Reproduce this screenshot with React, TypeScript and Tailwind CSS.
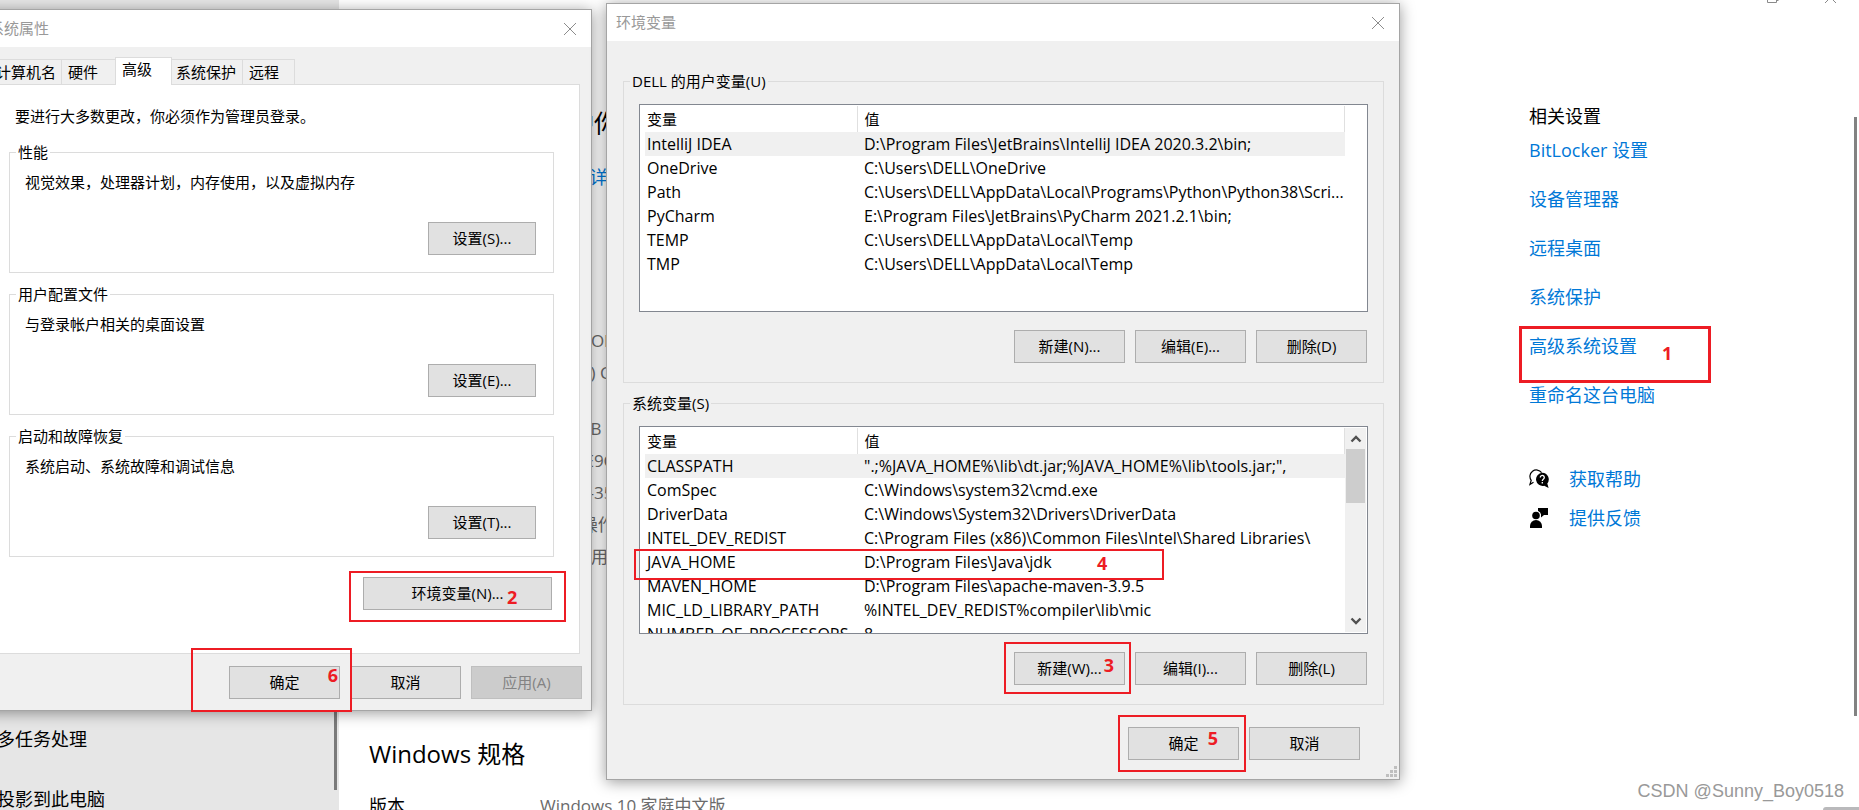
import clsx from "clsx";
import { ReactNode } from "react";

interface Variable {
  name: string;
  value: string;
}

const userVariables: Variable[] = [
  { name: "IntelliJ IDEA", value: "D:\\Program Files\\JetBrains\\IntelliJ IDEA 2020.3.2\\bin;" },
  { name: "OneDrive", value: "C:\\Users\\DELL\\OneDrive" },
  { name: "Path", value: "C:\\Users\\DELL\\AppData\\Local\\Programs\\Python\\Python38\\Scri..." },
  { name: "PyCharm", value: "E:\\Program Files\\JetBrains\\PyCharm 2021.2.1\\bin;" },
  { name: "TEMP", value: "C:\\Users\\DELL\\AppData\\Local\\Temp" },
  { name: "TMP", value: "C:\\Users\\DELL\\AppData\\Local\\Temp" },
];

const systemVariables: Variable[] = [
  { name: "CLASSPATH", value: '".;%JAVA_HOME%\\lib\\dt.jar;%JAVA_HOME%\\lib\\tools.jar;",' },
  { name: "ComSpec", value: "C:\\Windows\\system32\\cmd.exe" },
  { name: "DriverData", value: "C:\\Windows\\System32\\Drivers\\DriverData" },
  { name: "INTEL_DEV_REDIST", value: "C:\\Program Files (x86)\\Common Files\\Intel\\Shared Libraries\\" },
  { name: "JAVA_HOME", value: "D:\\Program Files\\Java\\jdk" },
  { name: "MAVEN_HOME", value: "D:\\Program Files\\apache-maven-3.9.5" },
  { name: "MIC_LD_LIBRARY_PATH", value: "%INTEL_DEV_REDIST%compiler\\lib\\mic" },
  { name: "NUMBER_OF_PROCESSORS", value: "8" },
];

const relatedLinks = [
  "BitLocker 设置",
  "设备管理器",
  "远程桌面",
  "系统保护",
  "高级系统设置",
  "重命名这台电脑",
];

interface StepProps {
  n: number;
  box: string;
  digit: string;
}

// red frame with its step number, laid over the control it sits in
const Step: React.FC<StepProps> = ({ n, box, digit }) => (
  <>
    <span className={clsx("pointer-events-none absolute z-10 border-[#ed1c24]", box)} />
    <span
      className={clsx(
        "pointer-events-none absolute z-10 text-lg leading-5 font-bold text-[#ed1c24]",
        digit
      )}
    >
      {n}
    </span>
  </>
);

interface ButtonProps {
  children: ReactNode;
  className?: string;
  disabled?: boolean;
}

const Button: React.FC<ButtonProps> = ({ children, className, disabled }) => (
  <button
    type="button"
    disabled={disabled}
    className={clsx(
      "h-[33px] border text-[15px]",
      disabled
        ? "border-[#bfbfbf] bg-[#cccccc] text-[#838383]"
        : "border-[#adadad] bg-[#e1e1e1] text-black",
      className ?? "w-[111px]"
    )}
  >
    {children}
  </button>
);

const CloseButton = () => (
  <button type="button" aria-label="关闭" className="p-2">
    <svg width="14" height="14" viewBox="0 0 14 14" stroke="#8c8c8c" fill="none">
      <path d="M1 1l12 12M13 1L1 13" />
    </svg>
  </button>
);

const Group: React.FC<{ title: string; children: ReactNode }> = ({ title, children }) => (
  <fieldset className="border border-[#dcdcdc]">
    <legend className="ml-[6px] px-[2px] leading-[22px]">{title}</legend>
    {children}
  </fieldset>
);

const SettingGroup: React.FC<{ title: string; text: string; button: string }> = ({
  title,
  text,
  button,
}) => (
  <Group title={title}>
    <div className="flex flex-col pt-2 pr-[17px] pb-[17px] pl-[15px]">
      <p className="leading-[22px]">{text}</p>
      <Button className="mt-[29px] w-[108px] self-end">{button}</Button>
    </div>
  </Group>
);

const ScrollBar = () => (
  <div className="my-px flex w-[21px] shrink-0 flex-col bg-[#f0f0f0] pl-px">
    <svg width="20" height="21" viewBox="0 0 20 21" fill="none" stroke="#505050" strokeWidth="2.4">
      <path d="M5.5 13.5L10 9l4.500 4.500" />
    </svg>
    <div className="h-[54px] w-[19px] bg-[#cdcdcd]" />
    <svg
      className="mt-auto"
      width="20"
      height="21"
      viewBox="0 0 20 21"
      fill="none"
      stroke="#505050"
      strokeWidth="2.4"
    >
      <path d="M5.500 7.500L10 12l4.500-4.500" />
    </svg>
  </div>
);

interface VariableTableProps {
  rows: Variable[];
  scroll?: boolean;
  marked?: boolean;
}

const VariableTable: React.FC<VariableTableProps> = ({ rows, scroll, marked }) => (
  <div className="relative">
    <div className="flex h-[208px] overflow-hidden border border-[#828790] bg-white pr-px pl-[5px]">
      <div className="min-w-0 flex-1 overflow-hidden pt-px">
        <table className="w-full table-fixed text-left">
          <thead>
            <tr className="h-[26px]">
              <th className="w-[212px] border-r border-[#e0e0e0] pl-[2px] font-normal">变量</th>
              <th className="border-r border-[#e0e0e0] pl-[7px] font-normal">值</th>
            </tr>
          </thead>
          <tbody>
            {rows.map((row, i) => (
              <tr
                key={row.name}
                className={clsx("h-6 text-base leading-6", i === 0 && "bg-[#f0f0f0]")}
              >
                <td className="pl-[2px] whitespace-nowrap">{row.name}</td>
                <td className="pl-[7px] whitespace-nowrap">{row.value}</td>
              </tr>
            ))}
          </tbody>
        </table>
      </div>
      {scroll ? <ScrollBar /> : <div className="w-[21px] shrink-0" />}
    </div>
    {marked && (
      <Step
        n={4}
        box="top-[123px] -left-[5px] h-[31px] w-[530px] border-2"
        digit="top-[127px] left-[458px]"
      />
    )}
  </div>
);

const SystemProperties = () => (
  <section className="absolute top-[9px] -left-5 w-[612px] border border-[#a5a5a5] bg-[#f0f0f0] shadow-[0_2px_14px_rgba(0,0,0,0.4)]">
    <header className="flex h-[37px] items-center justify-between bg-white pr-[6px] pl-2 text-[#999999]">
      <h2>系统属性</h2>
      <CloseButton />
    </header>
    <div className="pt-[10px] pr-[9px] pb-[11px] pl-2">
      <div role="tablist" className="flex h-[27px] items-end">
        <button type="button" role="tab" className="h-[25px] w-[73px] border border-b-0 border-[#dcdcdc] pl-[6px] text-left">
          计算机名
        </button>
        <button type="button" role="tab" className="h-[25px] w-[53px] border-t border-[#dcdcdc] pl-[6px] text-left">
          硬件
        </button>
        <button
          type="button"
          role="tab"
          aria-selected="true"
          className="relative -mb-px h-7 w-[57px] border border-b-0 border-[#dcdcdc] bg-white pb-1 pl-[6px] text-left"
        >
          高级
        </button>
        <button type="button" role="tab" className="h-[25px] w-[71px] border-t border-r border-[#dcdcdc] pl-1 text-left">
          系统保护
        </button>
        <button type="button" role="tab" className="h-[25px] w-[52px] border-t border-r border-[#dcdcdc] pl-[6px] text-left">
          远程
        </button>
      </div>
      <div className="mr-[2px] flex h-[570px] flex-col border border-[#dcdcdc] bg-white pt-5 pr-[25px] pl-[19px]">
        <p className="pl-[6px] leading-[22px]">要进行大多数更改，你必须作为管理员登录。</p>
        <div className="mt-[14px] flex flex-col gap-[10px]">
          <SettingGroup title="性能" text="视觉效果，处理器计划，内存使用，以及虚拟内存" button="设置(S)..." />
          <SettingGroup title="用户配置文件" text="与登录帐户相关的桌面设置" button="设置(E)..." />
          <SettingGroup title="启动和故障恢复" text="系统启动、系统故障和调试信息" button="设置(T)..." />
        </div>
        <div className="relative mt-5 mr-[2px] self-end">
          <Button className="w-[189px]">环境变量(N)...</Button>
          <Step n={2} box="-inset-x-[14px] -top-[6px] -bottom-3 border-2" digit="top-[10px] left-[144px]" />
        </div>
      </div>
      <div className="mt-3 flex justify-end gap-[10px]">
        <div className="relative">
          <Button>确定</Button>
          <Step
            n={6}
            box="-top-[18px] -right-3 -bottom-[13px] -left-[38px] border-2"
            digit="right-[2px] -top-px"
          />
        </div>
        <Button>取消</Button>
        <Button disabled>应用(A)</Button>
      </div>
    </div>
  </section>
);

const EnvironmentVariables = () => (
  <section className="absolute top-[3px] left-[606px] w-[794px] border border-[#a5a5a5] bg-[#f0f0f0] shadow-[0_2px_14px_rgba(0,0,0,0.4)]">
    <header className="flex h-[37px] items-center justify-between bg-white pr-[6px] pl-[9px] text-[#999999]">
      <h2>环境变量</h2>
      <CloseButton />
    </header>
    <div className="pt-[29px] pr-[15px] pb-[19px] pl-4">
      <div className="flex flex-col gap-[9px]">
        <Group title="DELL 的用户变量(U)">
          <div className="px-[15px] pt-3 pb-[19px]">
            <VariableTable rows={userVariables} />
            <div className="mt-[18px] flex justify-end gap-[10px] pr-px">
              <Button>新建(N)...</Button>
              <Button>编辑(E)...</Button>
              <Button>删除(D)</Button>
            </div>
          </div>
        </Group>
        <Group title="系统变量(S)">
          <div className="px-[15px] pt-3 pb-[19px]">
            <VariableTable rows={systemVariables} scroll marked />
            <div className="mt-[18px] flex justify-end gap-[10px] pr-px">
              <div className="relative">
                <Button>新建(W)...</Button>
                <Step
                  n={3}
                  box="-top-[10px] -right-[6px] -bottom-[9px] -left-[10px] border-2"
                  digit="right-[11px] top-[3px]"
                />
              </div>
              <Button>编辑(I)...</Button>
              <Button>删除(L)</Button>
            </div>
          </div>
        </Group>
      </div>
      <div className="mt-[22px] flex justify-end gap-[10px] pr-6">
        <div className="relative">
          <Button>确定</Button>
          <Step n={5} box="-top-3 -right-[7px] -bottom-3 -left-[10px] border-2" digit="right-[21px] top-px" />
        </div>
        <Button>取消</Button>
      </div>
    </div>
    <svg className="absolute right-[2px] bottom-[2px]" width="11" height="11" fill="#bfbfbf">
      <path d="M8 0h3v3h-3zM4 4h3v3h-3zM8 4h3v3h-3zM0 8h3v3h-3zM4 8h3v3h-3zM8 8h3v3h-3z" />
    </svg>
  </section>
);

const HelpIcon = () => (
  <svg width="20" height="20" viewBox="0 0 20 20">
    <path
      d="M4.500 13.200L.9 15.500l1.300-4.200A6.300 6.300 0 1 1 12.600 3.600"
      fill="none"
      stroke="#000"
      strokeWidth="1.200"
    />
    <path d="M13.300 3.800a6.600 6.600 0 0 1 5 10.700L19.600 19l-4.400-2.200a6.600 6.600 0 1 1-1.900-13z" />
    <path
      d="M11.300 8.500a2 2 0 1 1 3.200 1.500c-.8.600-1.200.9-1.200 2M13.300 13v1.500"
      fill="none"
      stroke="#fff"
      strokeWidth="1.300"
    />
  </svg>
);

const FeedbackIcon = () => (
  <svg width="20" height="20" viewBox="0 0 20 20">
    <path d="M9 0h10v7h-4l-3 2.500V6.500A5 5 0 0 0 9 3z" />
    <circle cx="7" cy="7.500" r="4.600" fill="#fff" />
    <circle cx="7" cy="7.500" r="3.800" />
    <path d="M1 20v-2a6 6 0 0 1 12 0v2z" />
  </svg>
);

const RelatedSettings = () => (
  <aside className="w-[330px] pt-[104px] text-lg leading-6">
    <h2>相关设置</h2>
    <ul className="mt-[10px] flex flex-col gap-[25px] text-[#0078d7]">
      {relatedLinks.map((link) => (
        <li key={link} className="relative">
          <a href="#">{link}</a>
          {link === "高级系统设置" && (
            <Step n={1} box="-top-2 -left-[10px] h-[57px] w-48 border-3" digit="top-[9px] left-[133px]" />
          )}
        </li>
      ))}
    </ul>
    <ul className="mt-[60px] flex flex-col gap-[15px] text-[#0078d7]">
      <li>
        <a href="#" className="flex items-center gap-5">
          <HelpIcon />
          获取帮助
        </a>
      </li>
      <li>
        <a href="#" className="flex items-center gap-5">
          <FeedbackIcon />
          提供反馈
        </a>
      </li>
    </ul>
  </aside>
);

const AboutPage = () => (
  <main className="min-w-0 flex-1 pt-[108px] pl-[30px] text-lg whitespace-nowrap">
    <h1 className="text-[25px] leading-[30px]">系统正在监控并保护你</h1>
    <a href="#" className="mt-[26px] block leading-[26px] text-[#0078d7]">
      在Windows安全中心中查看详
    </a>
    <div className="mt-[135px] pl-[171px] text-[17px] leading-8 text-[#6b6b6b]">
      <p>DESKTOP</p>
      <p className="h-14">Intel(R) Core</p>
      <p>16.0 GB (15</p>
      <p>4A7F-E9C</p>
      <p>00342-35</p>
      <p>64 位操作</p>
      <p>没有可用</p>
    </div>
    <h2 className="mt-[166px] text-2xl leading-[30px]">Windows 规格</h2>
    <dl className="mt-[21px] flex leading-8">
      <dt className="w-[171px]">版本</dt>
      <dd className="text-[17px] text-[#6b6b6b]">Windows 10 家庭中文版</dd>
    </dl>
  </main>
);

export default function App() {
  return (
    <div className="relative h-screen overflow-hidden bg-white font-['Open_Sans','Noto_Sans_CJK_SC',sans-serif] text-[15px] text-black">
      <div className="flex h-full overflow-hidden">
        <nav className="flex w-[339px] shrink-0 justify-between bg-[#e6e6e6] pt-[709px] pr-[2px] text-lg">
          <ul className="-ml-[3px]">
            <li className="flex h-[60px] items-center">
              <a href="#">多任务处理</a>
            </li>
            <li className="flex h-[60px] items-center">
              <a href="#">投影到此电脑</a>
            </li>
          </ul>
          <div className="h-[81px] w-[3px] bg-[#7a7a7a]" />
        </nav>
        <AboutPage />
        <RelatedSettings />
      </div>

      {/* caption buttons and scroll bar of the settings window */}
      <svg className="absolute top-0 right-[22px]" width="70" height="4" fill="none" stroke="#8a8a8a">
        <path d="M.5 0v2.500h9V0M9.500 .5h2M58 3l3-3M69 3l-3-3" />
      </svg>
      <div className="absolute top-[117px] right-[2px] h-[599px] w-[3px] bg-[#828282]" />

      <SystemProperties />
      <EnvironmentVariables />

      <div className="absolute right-0 bottom-0 h-[3px] w-9 rounded-tl-full bg-[#b9b9bb]" />
      <p className="absolute right-[15px] bottom-[7px] font-['Liberation_Sans',sans-serif] text-lg leading-6 text-[#999999]">
        CSDN @Sunny_Boy0518
      </p>
    </div>
  );
}
